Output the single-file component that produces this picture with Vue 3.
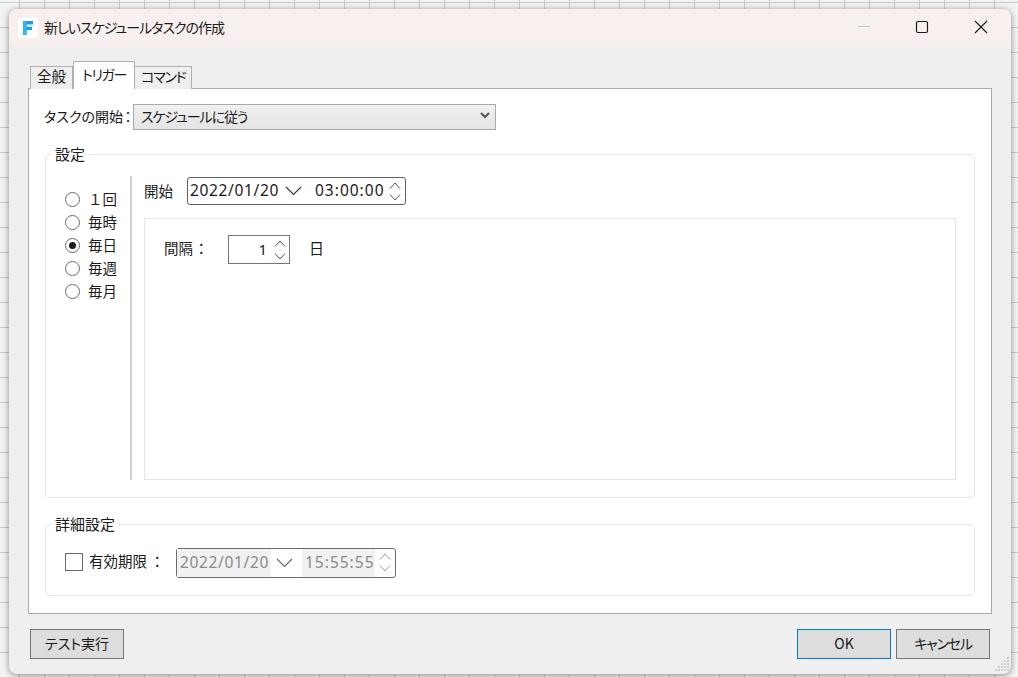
<script setup>
const radios = [
  { label: '１回', checked: false },
  { label: '毎時', checked: false },
  { label: '毎日', checked: true },
  { label: '毎週', checked: false },
  { label: '毎月', checked: false }
]
const tabs = [
  { label: '全般', active: false, kana: false },
  { label: 'トリガー', active: true, kana: true },
  { label: 'コマンド', active: false, kana: true }
]
const grip = []
for (let r = 0; r < 5; r++) {
  for (let c = 4 - r; c < 5; c++) {
    grip.push({ x: c * 3, y: r * 3 })
  }
}
</script>

<template>
  <div class="desk">
    <div class="win">
      <div class="titlebar">
        <div class="logo">
          <svg width="12" height="14" viewBox="0 0 12 14">
            <path d="M1 0h10v3.500H4.500v2.200H10v3.200H4.500V14H1z" fill="#12a0ee" />
            <path d="M1 0h3.500v14H1z" fill="#2bb6f6" />
          </svg>
        </div>
        <div class="title">新しいスケジュールタスクの作成</div>
        <div class="ctrls">
          <div class="ctrl"><svg width="14" height="14" viewBox="0 0 14 14"><path d="M1 6.500h12" stroke="#c4c4c4" fill="none" /></svg></div>
          <div class="ctrl"><svg width="14" height="14" viewBox="0 0 14 14"><rect x="1.500" y="1.500" width="11" height="11" rx="1.500" stroke="#1a1a1a" stroke-width="1.200" fill="none" /></svg></div>
          <div class="ctrl"><svg width="14" height="14" viewBox="0 0 14 14"><path d="M1 1l12 12M13 1L1 13" stroke="#1a1a1a" stroke-width="1.100" fill="none" /></svg></div>
        </div>
      </div>

      <div class="body">
        <div class="tabs">
          <div v-for="t in tabs" :key="t.label" class="tab" :class="{ active: t.active, kana: t.kana }">{{ t.label }}</div>
        </div>
        <div class="panel">
          <div class="start-row">
            <span class="start-label">タスクの開始<span class="colon">：</span></span>
            <div class="select">
              <span class="select-text">スケジュールに従う</span>
              <svg width="10" height="7" viewBox="0 0 10 7"><path d="M1 1l4 4 4-4" stroke="#555" stroke-width="2" fill="none" /></svg>
            </div>
          </div>

          <div class="group group-main">
            <div class="legend">設定</div>
            <div class="radios">
              <label v-for="r in radios" :key="r.label" class="radio-row">
                <span class="radio" :class="{ on: r.checked }"></span>
                <span class="radio-text">{{ r.label }}</span>
              </label>
            </div>
            <div class="detail">
              <div class="picker-row">
                <span class="picker-label">開始</span>
                <div class="picker">
                  <span class="seg date">2022/01/20</span>
                  <svg class="chev" width="17" height="10" viewBox="0 0 17 10"><path d="M1 1l7.500 7.500L16 1" stroke="#333" stroke-width="1.100" fill="none" /></svg>
                  <span class="seg time">03:00:00</span>
                  <div class="spin">
                    <svg width="12" height="7" viewBox="0 0 12 7"><path d="M1 6.500l5-5.500 5 5.500" stroke="#555" fill="none" /></svg>
                    <svg width="12" height="7" viewBox="0 0 12 7"><path d="M1 .5l5 5.500 5-5.500" stroke="#555" fill="none" /></svg>
                  </div>
                </div>
              </div>
              <div class="inner">
                <span class="interval-label">間隔<span class="colon">：</span></span>
                <div class="number">
                  <span class="num-val">1</span>
                  <div class="spin">
                    <svg width="12" height="7" viewBox="0 0 12 7"><path d="M1 6.500l5-5.500 5 5.500" stroke="#555" fill="none" /></svg>
                    <svg width="12" height="7" viewBox="0 0 12 7"><path d="M1 .5l5 5.500 5-5.500" stroke="#555" fill="none" /></svg>
                  </div>
                </div>
                <span class="unit">日</span>
              </div>
            </div>
          </div>

          <div class="group group-adv">
            <div class="legend">詳細設定</div>
            <span class="check"></span>
            <span class="check-label">有効期限<span class="colon">：</span></span>
            <div class="picker disabled">
              <span class="seg date">2022/01/20</span>
              <svg class="chev" width="17" height="10" viewBox="0 0 17 10"><path d="M1 1l7.500 7.500L16 1" stroke="#666" stroke-width="1.100" fill="none" /></svg>
              <span class="seg time">15:55:55</span>
              <div class="spin">
                <svg width="12" height="7" viewBox="0 0 12 7"><path d="M1 6.500l5-5.500 5 5.500" stroke="#999" fill="none" /></svg>
                <svg width="12" height="7" viewBox="0 0 12 7"><path d="M1 .5l5 5.500 5-5.500" stroke="#999" fill="none" /></svg>
              </div>
            </div>
          </div>
        </div>

        <div class="actions">
          <button class="btn"><span class="btn-text">テスト実行</span></button>
          <span class="spacer"></span>
          <button class="btn primary"><span class="btn-text">OK</span></button>
          <button class="btn"><span class="btn-text tight">キャンセル</span></button>
        </div>
      </div>

      <svg class="grip" width="15" height="15" viewBox="0 0 15 15">
        <rect v-for="(d, i) in grip" :key="i" :x="d.x" :y="d.y" width="2" height="2" fill="#cfcfcf" />
      </svg>
    </div>
  </div>
</template>

<style scoped>
.desk {
  width: 1018px;
  height: 677px;
  box-sizing: border-box;
  padding: 9px 7px 3px 9px;
  overflow: hidden;
  background-color: #f3f3f3;
  background-image:
    linear-gradient(to right, #c9c9c9 1px, transparent 1px),
    linear-gradient(to bottom, #c9c9c9 1px, transparent 1px);
  background-size: 25px 25px;
  background-position: 19px 2px;
  font-family: "Noto Sans CJK JP", "Noto Sans", sans-serif;
  font-size: 14.5px;
  color: #1a1a1a;
  font-feature-settings: "palt";
}
.win {
  position: relative;
  height: 100%;
  border-radius: 8px;
  background: #efefef;
  overflow: hidden;
  box-shadow: 0 1px 6px rgba(0, 0, 0, 0.45);
  display: flex;
  flex-direction: column;
}
.titlebar {
  height: 37px;
  flex: none;
  background: #f8f0ee;
  display: flex;
  align-items: center;
  padding-left: 9px;
}
.logo {
  width: 20px;
  height: 20px;
  background: #fff;
  border-radius: 3px;
  display: flex;
  align-items: center;
  justify-content: center;
}
.title {
  margin-left: 6px;
  margin-top: -2px;
  font-size: 14px;
  letter-spacing: -1px;
  line-height: 20px;
}
.ctrls {
  margin-left: auto;
  margin-right: 1px;
  display: flex;
  margin-top: -2px;
}
.ctrl {
  width: 58.5px;
  display: flex;
  justify-content: center;
}
.body {
  flex: 1;
  padding: 15px 19px 0;
  display: flex;
  flex-direction: column;
}
.tabs {
  display: flex;
  align-items: flex-end;
  height: 28px;
  padding-left: 2px;
  position: relative;
  z-index: 1;
  margin-bottom: -1px;
}
.tab {
  height: 23px;
  box-sizing: border-box;
  padding: 0 6px;
  border: 1px solid #b0b0b0;
  border-bottom: 0;
  margin-right: -1px;
  line-height: 18px;
  background: #efefef;
}
.tab.kana {
  font-size: 14px;
  letter-spacing: -1.3px;
}
.tab.active {
  height: 28px;
  padding: 0 8px;
  margin-left: 1px;
  line-height: 24px;
  background: #fff;
  position: relative;
  z-index: 1;
}
.panel {
  height: 526px;
  box-sizing: border-box;
  border: 1px solid #aaa;
  background: #fff;
  padding: 15px 16px 0;
}
.start-row {
  display: flex;
  height: 26px;
  margin-left: -2px;
}
.start-label {
  width: 90px;
  flex: none;
  padding-left: 1px;
  box-sizing: border-box;
  font-size: 14px;
  line-height: 24px;
  white-space: nowrap;
}
.colon {
  font-feature-settings: normal;
  margin-left: 3px;
}
.start-label .colon {
  margin-left: -2px;
}
.interval-label .colon {
  margin-left: 1px;
}
.select {
  width: 363px;
  height: 26px;
  box-sizing: border-box;
  border: 1px solid #a9a9a9;
  background: linear-gradient(#f1f1f1, #e4e4e4);
  display: flex;
  align-items: center;
  justify-content: space-between;
  padding: 0 5px 0 7px;
}
.select-text {
  font-size: 14px;
  letter-spacing: -1.1px;
  margin-top: -3px;
}
.select svg {
  margin-top: -3px;
}
.group {
  position: relative;
  box-sizing: border-box;
  border: 1px solid #dde6ee;
  border-radius: 5px;
}
.legend {
  position: absolute;
  left: 5px;
  top: -10px;
  padding: 0 4px;
  background: #fff;
  font-size: 15px;
  line-height: 18px;
}
.group-main {
  margin-top: 24px;
  height: 344px;
  display: flex;
  padding: 21px 18px 17px 0;
}
.radios {
  width: 86px;
  flex: none;
  padding: 12px 0 0 19px;
  border-right: 2px solid #cfcfcf;
  box-sizing: border-box;
}
.radio-row {
  display: flex;
  align-items: center;
  height: 23px;
}
.radio {
  width: 15px;
  height: 15px;
  box-sizing: border-box;
  border: 1px solid #6b6b6b;
  border-radius: 50%;
  background: #fff;
  flex: none;
  display: flex;
  align-items: center;
  justify-content: center;
}
.radio.on::after {
  content: "";
  width: 7px;
  height: 7px;
  border-radius: 50%;
  background: #1a1a1a;
}
.radio-text {
  margin-left: 8px;
  margin-top: -3px;
  white-space: nowrap;
  font-feature-settings: normal;
}
.detail {
  flex: 1;
  display: flex;
  flex-direction: column;
  padding-left: 12px;
}
.picker-row {
  display: flex;
  align-items: center;
  height: 28px;
  margin-top: 1px;
}
.picker-label {
  width: 43px;
  flex: none;
  margin-top: -1px;
}
.picker {
  height: 28px;
  width: 219px;
  box-sizing: border-box;
  border: 1px solid #5f5f5f;
  border-radius: 3px;
  display: flex;
  align-items: center;
  background: #fff;
  font-family: "Noto Sans", sans-serif;
  font-size: 15.5px;
  letter-spacing: 0.65px;
  font-feature-settings: normal;
  flex: none;
}
.seg {
  height: 100%;
  display: flex;
  align-items: center;
  padding-bottom: 2px;
  box-sizing: border-box;
}
.date {
  padding-left: 2px;
  width: 94px;
  flex: none;
}
.chev {
  margin-left: 3px;
  margin-right: 1px;
  flex: none;
}
.time {
  margin-left: 12px;
  width: 72px;
  flex: none;
  letter-spacing: 1px;
  white-space: nowrap;
}
.spin {
  display: flex;
  flex-direction: column;
  gap: 5px;
  margin-left: auto;
  margin-right: 4px;
  flex: none;
}
.spin svg {
  display: block;
}
.inner {
  flex: 1;
  margin-top: 13px;
  border: 1px solid #dde6ee;
  display: flex;
  align-items: flex-start;
  padding: 16px 0 0 19px;
}
.interval-label {
  width: 64px;
  flex: none;
  line-height: 26px;
  white-space: nowrap;
}
.number {
  width: 62px;
  height: 29px;
  box-sizing: border-box;
  border: 1px solid #767676;
  display: flex;
  align-items: center;
  font-family: "Noto Sans", sans-serif;
  font-size: 15px;
}
.num-val {
  margin-left: auto;
  margin-right: 7px;
  margin-top: -2px;
}
.number .spin {
  margin-left: 0;
  margin-right: 3px;
  gap: 6px;
}
.unit {
  margin-left: 19px;
  font-size: 15px;
  line-height: 26px;
}
.group-adv {
  margin-top: 26px;
  height: 72px;
  display: flex;
  align-items: center;
  padding-left: 19px;
  padding-top: 5px;
}
.check {
  width: 18px;
  height: 18px;
  box-sizing: border-box;
  border: 1px solid #6b6b6b;
  flex: none;
  margin-top: -2px;
}
.check-label {
  margin-left: 6px;
  margin-top: -5px;
  width: 87px;
  flex: none;
  white-space: nowrap;
}
.picker.disabled {
  height: 30px;
  width: 220px;
  color: #8a8a8a;
  border-color: #6d6d6d;
}
.picker.disabled .seg {
  background: #f1f1f1;
  padding-bottom: 1px;
}
.picker.disabled .date {
  padding-left: 3px;
}
.picker.disabled .chev {
  margin-left: 5px;
  margin-right: 0;
}
.picker.disabled .time {
  margin-left: 9px;
  padding-left: 3px;
  width: 73px;
}
.actions {
  display: flex;
  margin-top: 15px;
  padding: 0 2px;
  gap: 5px;
}
.spacer {
  flex: 1;
}
.btn {
  width: 94px;
  height: 30px;
  box-sizing: border-box;
  border: 1px solid #767676;
  background: #dddddd;
  font: inherit;
  font-size: 14px;
  font-feature-settings: "palt";
  color: #1a1a1a;
  padding: 0 0 2px;
}
.btn-text {
  display: block;
}
.btn-text.tight {
  letter-spacing: -1.2px;
}
.btn.primary {
  border-color: #0078d4;
}
.grip {
  position: absolute;
  right: 1px;
  bottom: 2px;
}
</style>
